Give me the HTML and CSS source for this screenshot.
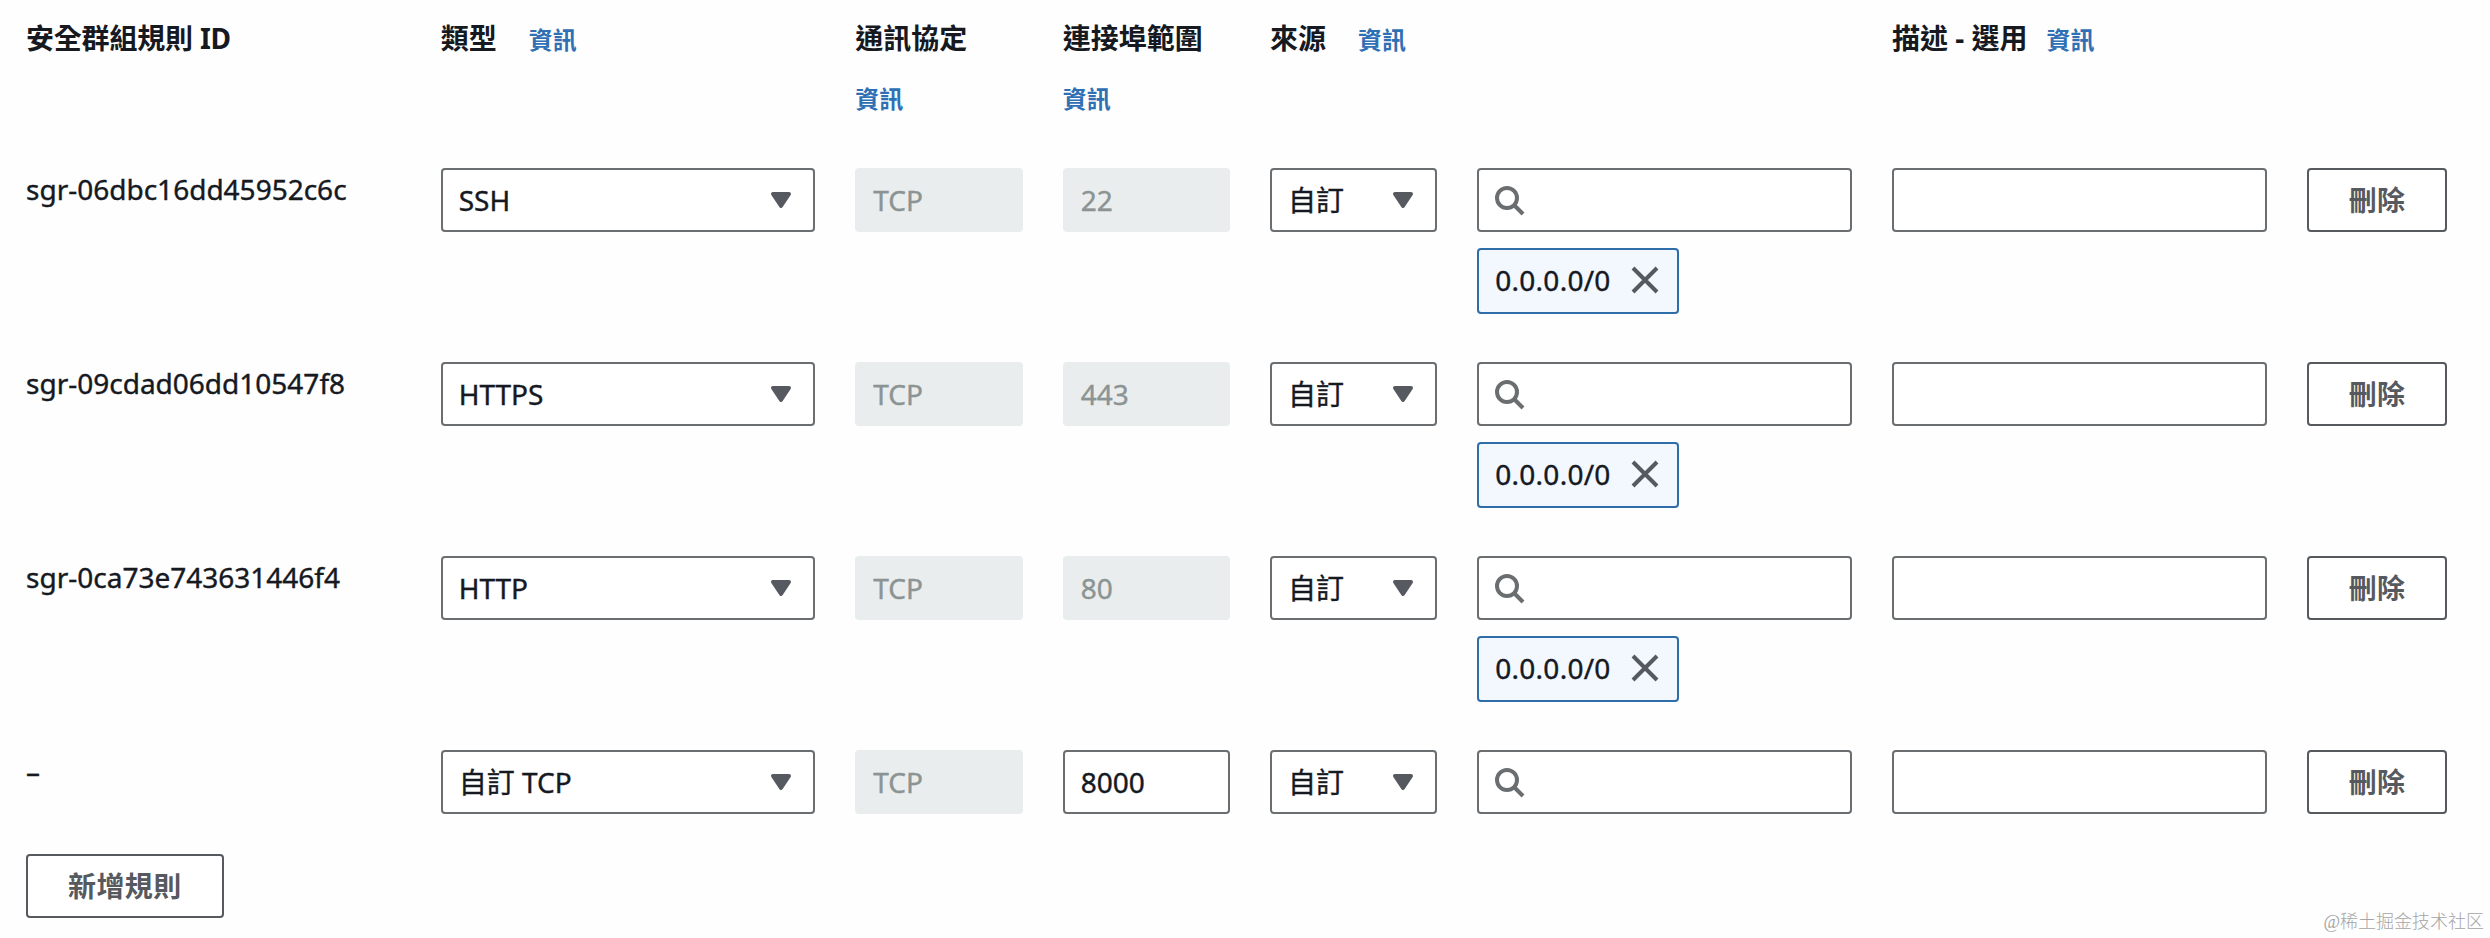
FILE: index.html
```html
<!DOCTYPE html>
<html lang="zh-Hant">
    <head>
        <meta charset="UTF-8">
        <meta name="viewport" content="width=device-width, initial-scale=1.0">
        <title>傳入規則</title>
        <link rel="stylesheet" href="styles.css">
    </head>
    <body>
        <svg class="sprite">
            <symbol id="arrow" viewBox="0 0 16 16">
                <path d="M4 5h8l-4 6z" fill="currentColor" stroke="currentColor" stroke-width="2" stroke-linejoin="round"/>
            </symbol>
            <symbol id="search" viewBox="0 0 16 16">
                <circle cx="7" cy="7" r="5" fill="none" stroke="currentColor" stroke-width="2"/>
                <path d="M15 15l-4.5-4.5" fill="none" stroke="currentColor" stroke-width="2"/>
            </symbol>
            <symbol id="close" viewBox="0 0 16 16">
                <path d="M2 2l12 12M14 2L2 14" fill="none" stroke="currentColor" stroke-width="2"/>
            </symbol>
        </svg>

        <div class="rules">
            <div class="row header">
                <div class="col-2">安全群組規則 ID</div>
                <div class="col-2">類型<a class="info wide">資訊</a></div>
                <div>通訊協定<a class="info below">資訊</a></div>
                <div>連接埠範圍<a class="info below">資訊</a></div>
                <div class="col-3">來源<a class="info wide">資訊</a></div>
                <div class="col-2">描述 - 選用<a class="info">資訊</a></div>
            </div>

            <div class="row">
                <div class="col-2 rule-id">sgr-06dbc16dd45952c6c</div>
                <div class="col-2"><div class="field select">SSH<svg class="icon"><use href="#arrow"/></svg></div></div>
                <div><div class="field disabled">TCP</div></div>
                <div><div class="field disabled">22</div></div>
                <div><div class="field select">自訂<svg class="icon"><use href="#arrow"/></svg></div></div>
                <div class="col-2">
                    <div class="field search"><svg class="icon"><use href="#search"/></svg></div>
                    <div class="token">0.0.0.0/0<svg class="icon"><use href="#close"/></svg></div>
                </div>
                <div class="col-2"><div class="field"></div></div>
                <div><button class="button">刪除</button></div>
            </div>

            <div class="row">
                <div class="col-2 rule-id">sgr-09cdad06dd10547f8</div>
                <div class="col-2"><div class="field select">HTTPS<svg class="icon"><use href="#arrow"/></svg></div></div>
                <div><div class="field disabled">TCP</div></div>
                <div><div class="field disabled">443</div></div>
                <div><div class="field select">自訂<svg class="icon"><use href="#arrow"/></svg></div></div>
                <div class="col-2">
                    <div class="field search"><svg class="icon"><use href="#search"/></svg></div>
                    <div class="token">0.0.0.0/0<svg class="icon"><use href="#close"/></svg></div>
                </div>
                <div class="col-2"><div class="field"></div></div>
                <div><button class="button">刪除</button></div>
            </div>

            <div class="row">
                <div class="col-2 rule-id">sgr-0ca73e743631446f4</div>
                <div class="col-2"><div class="field select">HTTP<svg class="icon"><use href="#arrow"/></svg></div></div>
                <div><div class="field disabled">TCP</div></div>
                <div><div class="field disabled">80</div></div>
                <div><div class="field select">自訂<svg class="icon"><use href="#arrow"/></svg></div></div>
                <div class="col-2">
                    <div class="field search"><svg class="icon"><use href="#search"/></svg></div>
                    <div class="token">0.0.0.0/0<svg class="icon"><use href="#close"/></svg></div>
                </div>
                <div class="col-2"><div class="field"></div></div>
                <div><button class="button">刪除</button></div>
            </div>

            <div class="row last">
                <div class="col-2 rule-id">–</div>
                <div class="col-2"><div class="field select">自訂 TCP<svg class="icon"><use href="#arrow"/></svg></div></div>
                <div><div class="field disabled">TCP</div></div>
                <div><div class="field">8000</div></div>
                <div><div class="field select">自訂<svg class="icon"><use href="#arrow"/></svg></div></div>
                <div class="col-2"><div class="field search"><svg class="icon"><use href="#search"/></svg></div></div>
                <div class="col-2"><div class="field"></div></div>
                <div><button class="button">刪除</button></div>
            </div>

            <button class="button add">新增規則</button>
        </div>

        <div class="watermark">@稀土掘金技术社区</div>
    </body>
</html>
```
FILE: styles.css
```css
* {
    box-sizing: border-box;
}

body {
    margin: 0;
    background: #fefefe;
    color: #16191f;
    font-family: "Noto Sans", "Noto Sans CJK TC", sans-serif;
    font-size: 28px;
    line-height: 44px;
}

.sprite {
    display: none;
}

.rules {
    padding: 16px 16px 0 26px;
}

.row {
    display: grid;
    grid-template-columns: repeat(12, 1fr);
    column-gap: 40px;
    align-items: start;
    height: 194px;
}

.row > div {
    min-width: 0;
    white-space: nowrap;
}

.col-2 {
    grid-column: span 2;
}

.col-3 {
    grid-column: span 3;
}

.header {
    height: 152px;
    font-weight: 700;
}

.header > div:first-child {
    letter-spacing: -0.2px;
}

.rule-id,
.field,
.token {
    -webkit-text-stroke: 0.4px currentColor;
}

.rule-id {
    line-height: 43px;
}

.last {
    height: 104px;
}

.info {
    margin-left: 19px;
    color: #2f70b5;
    font-size: 24px;
}

.info.wide {
    margin-left: 32px;
}

.info.below {
    display: block;
    margin: 17px 0 0;
}

.field {
    display: flex;
    align-items: center;
    height: 64px;
    padding: 0 16px;
    border: 2px solid #6b6e70;
    border-radius: 4px;
    background: #fff;
}

.select {
    justify-content: space-between;
}

.disabled {
    border-color: #eaeded;
    background: #eaeded;
    color: #8b9493;
}

.icon {
    width: 32px;
    height: 32px;
    color: #565a60;
}

.search .icon {
    color: #6b6e70;
}

.search {
    padding-left: 14px;
}

.token {
    display: flex;
    align-items: center;
    gap: 18px;
    width: fit-content;
    height: 66px;
    margin-top: 16px;
    padding: 0 16px 2px;
    border: 2px solid #2f6da9;
    border-radius: 4px;
    background: #f3f8ff;
    letter-spacing: 0.25px;
}

.button {
    height: 64px;
    padding: 0 40px;
    border: 2px solid #56595e;
    border-radius: 4px;
    background: #fff;
    color: #56595e;
    font: inherit;
    font-weight: 700;
    letter-spacing: 0.4px;
}

.watermark {
    position: absolute;
    right: 6px;
    bottom: 3px;
    color: #a5a5a5;
    font-family: "Liberation Serif", "Noto Sans CJK SC", serif;
    font-size: 18px;
    font-weight: 300;
    line-height: 26px;
}
```
